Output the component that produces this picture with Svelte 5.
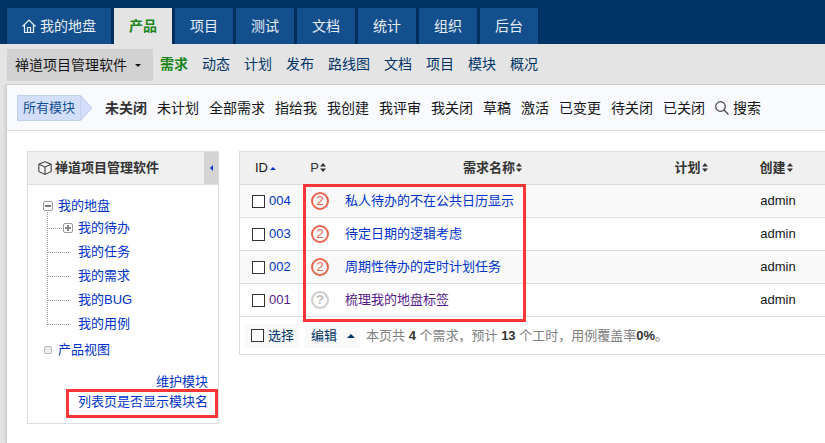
<script>
  const tabs = ['产品', '项目', '测试', '文档', '统计', '组织', '后台']
  const submenu = ['需求', '动态', '计划', '发布', '路线图', '文档', '项目', '模块', '概况']
  const filters = [
    '未关闭', '未计划', '全部需求', '指给我', '我创建', '我评审',
    '我关闭', '草稿', '激活', '已变更', '待关闭', '已关闭'
  ]
  const children = ['我的待办', '我的任务', '我的需求', '我的BUG', '我的用例']
  const stories = [
    { id: '004', pri: '2', title: '私人待办的不在公共日历显示', by: 'admin' },
    { id: '003', pri: '2', title: '待定日期的逻辑考虑', by: 'admin' },
    { id: '002', pri: '2', title: '周期性待办的定时计划任务', by: 'admin' },
    { id: '001', pri: '?', title: '梳理我的地盘标签', by: 'admin', visited: true }
  ]
</script>

{#snippet sorter()}
  <svg class="sorter" width="6" height="9" viewBox="0 0 6 9" aria-hidden="true">
    <path d="M0 3.5 3 0l3 3.5zM0 5.5 3 9l3-3.5z" fill="currentColor" />
  </svg>
{/snippet}

<div class="page">
  <header>
    <nav class="mainmenu" aria-label="主菜单">
      <a href="#my">
        <svg width="14" height="14" viewBox="0 0 14 14" fill="none" stroke="currentColor" stroke-width="1.2" aria-hidden="true">
          <path d="M.5 7.5 7 1l6.5 6.5M2.5 6v7.5h9V6M5.5 13.5v-5h3v5" />
        </svg>
        我的地盘
      </a>
      {#each tabs as tab, i}
        <a href="#{tab}" class:active={i === 0}>{tab}</a>
      {/each}
    </nav>
  </header>

  <div class="modulemenu">
    <button class="product" type="button">禅道项目管理软件 <i class="caret"></i></button>
    <nav aria-label="产品菜单">
      {#each submenu as item, i}
        <a href="#{item}" class:active={i === 0}>{item}</a>
      {/each}
    </nav>
  </div>

  <main>
    <div class="featurebar">
      <a class="label" href="#all">
        <svg width="76" height="26" viewBox="0 0 76 26" aria-hidden="true">
          <path d="M.5.5H63.5L75 13 63.5 25.5H.5z" fill="#d2defa" stroke="#c0cdec" />
          <path d="M63.5 1v24" stroke="#c5d1ef" />
        </svg>
        <span>所有模块</span>
      </a>
      <nav aria-label="筛选">
        {#each filters as item, i}
          <a href="#{item}" class:active={i === 0}>{item}</a>
        {/each}
        <a class="search" href="#search">
          <svg width="14" height="14" viewBox="0 0 14 14" fill="none" stroke="#444" stroke-width="1.2" aria-hidden="true">
            <circle cx="5.5" cy="5.5" r="4.8" />
            <path d="m9 9 4.5 4.5" />
          </svg>
          搜索
        </a>
      </nav>
    </div>

    <div class="content">
      <aside>
        <div class="heading">
          <svg width="14" height="14" viewBox="0 0 14 14" fill="none" stroke="#333" aria-hidden="true">
            <path d="M7 .7 13.2 3.2v7.4L7 13.4.8 10.6V3.2zM.8 3.2 7 6l6.2-2.8M7 6v7.4" />
          </svg>
          <strong>禅道项目管理软件</strong>
          <button class="collapse" type="button" aria-label="收起"><i></i></button>
        </div>
        <ul class="tree">
          <li class="parent">
            <button class="toggle minus" type="button" aria-label="折叠"></button>
            <a href="#my">我的地盘</a>
            <ul>
              {#each children as name, i}
                <li>
                  {#if i === 0}
                    <button class="toggle plus" type="button" aria-label="展开"></button>
                  {/if}
                  <a href="#{name}">{name}</a>
                </li>
              {/each}
            </ul>
          </li>
          <li class="leaf">
            <i class="dot"></i>
            <a href="#view">产品视图</a>
          </li>
        </ul>
        <div class="links">
          <a href="#manage">维护模块</a>
          <a href="#show">列表页是否显示模块名</a>
          <div class="mark mark-link"></div>
        </div>
      </aside>

      <section>
        <table>
          <thead>
            <tr>
              <th class="id">ID<i class="caret up"></i></th>
              <th class="pri">P{@render sorter()}</th>
              <th>需求名称{@render sorter()}</th>
              <th class="plan">计划{@render sorter()}</th>
              <th class="by">创建{@render sorter()}</th>
            </tr>
          </thead>
          <tbody>
            {#each stories as story}
              <tr class:visited={story.visited}>
                <td class="id">
                  <div class="check">
                    <input type="checkbox" aria-label={story.id} />
                    <a href="#{story.id}">{story.id}</a>
                  </div>
                </td>
                <td class="pri"><span class:unset={story.pri === '?'}>{story.pri}</span></td>
                <td class="title"><a href="#{story.id}">{story.title}</a></td>
                <td></td>
                <td class="by">{story.by}</td>
              </tr>
            {/each}
          </tbody>
        </table>
        <div class="tfoot">
          <label><input type="checkbox" />选择</label>
          <button class="edit" type="button">编辑 <i class="caret up"></i></button>
          <p>本页共 <strong>4</strong> 个需求，预计 <strong>13</strong> 个工时，用例覆盖率<strong>0%</strong>。</p>
        </div>
        <div class="mark mark-list"></div>
      </section>
    </div>
  </main>
</div>

<style>
  :global(body) {
    margin: 0;
    background: #e4e4e4;
  }

  .page {
    display: flex;
    flex-direction: column;
    min-height: 100vh;
    overflow: hidden;
    font: 13px/20px "Liberation Sans", "Noto Sans CJK SC", sans-serif;
    color: #141414;
  }

  a {
    color: #03c;
    text-decoration: none;
  }

  button {
    border: 0;
    padding: 0;
    font: inherit;
    cursor: pointer;
  }

  svg {
    flex: none;
  }

  header {
    background: #036;
    padding: 8px 7px 0;
  }

  .mainmenu {
    display: flex;
    gap: 3px;
  }

  .mainmenu a {
    display: flex;
    align-items: center;
    gap: 4px;
    height: 36px;
    padding: 0 15px;
    background: #144f8d;
    box-shadow: 0 0 4px rgba(0, 0, 0, .2);
    color: #e8eef5;
    font-size: 14px;
    white-space: nowrap;
  }

  .mainmenu a.active {
    background: #e4e4e4;
    color: #1a851a;
    font-weight: bold;
  }

  .modulemenu {
    display: flex;
    align-items: flex-start;
    gap: 7px;
    height: 35px;
    padding: 5px 7px 0;
    background: #e4e4e4;
    font-size: 14px;
    white-space: nowrap;
    z-index: 1;
  }

  .modulemenu nav {
    display: flex;
    gap: 14px;
    line-height: 30px;
  }

  .modulemenu nav a {
    color: #036;
  }

  .modulemenu nav a.active {
    color: #1a851a;
    font-weight: bold;
  }

  .product {
    display: flex;
    align-items: center;
    gap: 8px;
    height: 32px;
    padding: 0 12px 0 8px;
    background: #d2d2d2;
    color: #141414;
  }

  .caret {
    display: inline-block;
    border: 3px solid transparent;
    border-top-color: currentColor;
    border-bottom: 0;
  }

  .caret.up {
    border-top: 0;
    border-bottom: 3px solid currentColor;
  }

  main {
    flex: 1;
    margin-left: 6px;
    border: solid #ccc;
    border-width: 1px 0 0 1px;
    background: #fff;
    box-shadow: 0 0 4px rgba(0, 0, 0, .15);
  }

  .featurebar {
    display: flex;
    align-items: center;
    gap: 12px;
    height: 45px;
    padding-left: 10px;
    border-bottom: 1px solid #ddd;
    background: #f8fafe;
    white-space: nowrap;
  }

  .label {
    display: grid;
    align-items: center;
    color: #145090;
  }

  .label svg,
  .label span {
    grid-area: 1 / 1;
  }

  .label span {
    padding-left: 6px;
  }

  .featurebar nav {
    display: flex;
    gap: 10px;
    font-size: 14px;
  }

  .featurebar nav a {
    color: #141414;
  }

  .featurebar nav a.active {
    color: #333;
    font-weight: bold;
  }

  .featurebar nav .search {
    display: flex;
    align-items: center;
    gap: 4px;
  }

  .content {
    display: flex;
    align-items: flex-start;
    gap: 20px;
    padding: 20px 0 19px 20px;
  }

  aside {
    box-sizing: border-box;
    flex: 0 0 192px;
    border: 1px solid #ddd;
  }

  .heading {
    display: flex;
    align-items: center;
    gap: 3px;
    height: 32px;
    padding-left: 10px;
    border-bottom: 1px solid #ddd;
    background: #f0f0f0;
    color: #333;
    white-space: nowrap;
  }

  .collapse {
    display: flex;
    align-items: center;
    justify-content: center;
    align-self: stretch;
    width: 14px;
    margin-left: auto;
    background: #d4d4d4;
  }

  .collapse i {
    border: 3px solid transparent;
    border-right-color: #03c;
    border-left: 0;
  }

  .tree,
  .tree ul {
    margin: 0;
    padding: 0;
    list-style: none;
  }

  .tree {
    padding: 11px 0 0 30px;
  }

  .tree li {
    position: relative;
  }

  .tree ul li {
    height: 24px;
    padding-left: 20px;
  }

  .tree ul {
    line-height: 24px;
  }

  /* dotted connectors between the branch and its children */
  .tree ul li::before {
    content: '';
    position: absolute;
    top: -12px;
    left: -11px;
    width: 21px;
    height: 24px;
    border: dotted #999;
    border-width: 0 0 1px 1px;
  }

  .tree ul li:first-child::before {
    top: -4px;
    width: 14px;
    height: 16px;
  }

  .toggle {
    position: absolute;
    top: 5px;
    left: -15px;
    box-sizing: border-box;
    width: 10px;
    height: 10px;
    border: 1px solid #999;
    border-radius: 2px;
    background: linear-gradient(#777, #777) center / 6px 2px no-repeat #fff;
  }

  .tree ul .toggle {
    top: 7px;
    left: 5px;
  }

  .toggle.plus {
    background:
      linear-gradient(#888, #888) center / 6px 2px no-repeat,
      linear-gradient(#888, #888) center / 2px 6px no-repeat #fff;
  }

  .leaf {
    margin-top: 4px;
  }

  .dot {
    position: absolute;
    top: 6px;
    left: -14px;
    box-sizing: border-box;
    width: 8px;
    height: 8px;
    border: 1px solid #bbb;
    border-radius: 2px;
    background: #eee;
  }

  .links {
    position: relative;
    display: flex;
    flex-direction: column;
    align-items: flex-end;
    padding: 12px 10px 11px 0;
  }

  section {
    position: relative;
    flex: 1;
    min-width: 0;
    border: solid #ddd;
    border-width: 1px 0 1px 1px;
  }

  table {
    width: 100%;
    border-spacing: 0;
    table-layout: fixed;
  }

  th,
  td {
    box-sizing: border-box;
    height: 33px;
    padding: 0;
    border-bottom: 1px solid #ddd;
    text-align: center;
  }

  th {
    background: #f0f0f0;
    color: #333;
  }

  tbody tr:nth-child(odd) {
    background: #f9f9f9;
  }

  th.id {
    width: 64px;
    padding-left: 15px;
    text-align: left;
    font-weight: normal;
    color: #141414;
  }

  th.id .caret {
    margin-left: 2px;
    vertical-align: middle;
    color: #03c;
  }

  th.pri {
    width: 34px;
    padding-right: 6px;
    font-weight: normal;
  }

  .plan {
    width: 88px;
  }

  .by {
    width: 90px;
    padding-right: 8px;
  }

  td.by {
    padding-right: 4px;
  }

  .sorter {
    margin-left: 1px;
  }

  input {
    appearance: none;
    flex: none;
    box-sizing: border-box;
    width: 13px;
    height: 13px;
    margin: 0;
    border: 1px solid #333;
    background: #fff;
  }

  .check {
    display: flex;
    align-items: center;
    gap: 4px;
    padding-left: 12px;
  }

  td.pri span {
    display: block;
    box-sizing: border-box;
    width: 18px;
    height: 18px;
    margin-left: 7px;
    border: 2px solid #e9664c;
    border-radius: 50%;
    line-height: 14px;
    color: #e9664c;
  }

  td.pri .unset {
    border-color: #ccc;
    color: #bbb;
    font-weight: bold;
  }

  .title {
    padding-left: 7px;
    text-align: left;
  }

  .visited a {
    color: #551a8b;
  }

  .tfoot {
    display: flex;
    align-items: center;
    gap: 6px;
    height: 37px;
    padding-left: 5px;
    color: #808080;
    white-space: nowrap;
  }

  .tfoot label,
  .edit {
    display: flex;
    align-items: center;
    gap: 4px;
    height: 24px;
    padding: 0 5px 0 6px;
    background: #f9f9f9;
    color: #036;
  }

  .edit {
    gap: 10px;
  }

  .edit .caret {
    border-width: 0 4px 4px;
  }

  .tfoot p {
    margin: 0;
  }

  .tfoot strong {
    color: #333;
  }

  .mark {
    position: absolute;
    box-sizing: border-box;
    border: 3px solid #fb3638;
    pointer-events: none;
  }

  .mark-list {
    top: 32px;
    left: 63px;
    width: 223px;
    height: 138px;
  }

  .mark-link {
    right: 0;
    bottom: 5px;
    width: 152px;
    height: 29px;
  }
</style>
